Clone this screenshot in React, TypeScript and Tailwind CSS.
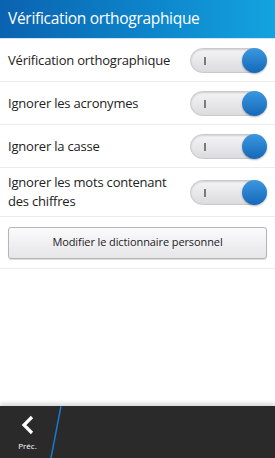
import React from "react";

const rows = [
  { label: "Vérification orthographique", h: "h-[43px]" },
  { label: "Ignorer les acronymes", h: "h-[43px]" },
  { label: "Ignorer la casse", h: "h-[43px]" },
  { label: "Ignorer les mots contenant des chiffres", h: "h-[49px]" },
];

function Toggle() {
  return (
    <div className="relative w-[77px] h-[25px] rounded-full border border-[#c9c9cc] bg-gradient-to-b from-[#f4f4f6] to-[#dcdce0] shadow-[inset_0_1px_2px_rgba(0,0,0,0.15)]">
      <div className="absolute left-[13px] top-[8px] w-[1.5px] h-[8px] bg-[#7a7a7a]" />
      <div className="absolute right-[-1px] top-[-1px] w-[25px] h-[25px] rounded-full bg-gradient-to-b from-[#3b98e0] to-[#1468b8] shadow-[0_1px_2px_rgba(0,0,0,0.3)]" />
    </div>
  );
}

export default function App() {
  return (
    <div
      className="w-[275px] h-[458px] flex flex-col bg-white overflow-hidden"
      style={{ fontFamily: "'Open Sans', 'Noto Sans', sans-serif" }}
    >
      <div className="h-[39px] shrink-0 flex items-center px-2 bg-gradient-to-r from-[#0b62b0] to-[#14a3e0] border-b border-[#cfe7f5]">
        <span className="text-white text-[15.5px] tracking-[-0.3px]">Vérification orthographique</span>
      </div>
      <div className="flex flex-col">
        {rows.map((r) => (
          <div
            key={r.label}
            className={`${r.h} flex items-center justify-between pl-2 pr-[8px] border-b border-[#ececec]`}
          >
            <span className="text-[13px] leading-[19px] text-[#222] w-[170px] tracking-[-0.2px]">{r.label}</span>
            <Toggle />
          </div>
        ))}
        <div className="h-[52px] flex items-center px-2 border-b border-[#ececec]">
          <button className="w-full h-[32px] rounded-[3px] border border-[#b5b5b8] bg-gradient-to-b from-[#fbfbfc] to-[#e6e6ea] text-[11px] text-[#222] tracking-[-0.1px] shadow-[0_1px_1px_rgba(0,0,0,0.15)]">
            Modifier le dictionnaire personnel
          </button>
        </div>
      </div>
      <div className="flex-1" />
      <div className="h-[52px] shrink-0 relative bg-[#2b2a2b] shadow-[0_-3px_4px_rgba(0,0,0,0.15)] flex">
        <div className="w-[55px] flex flex-col items-center pt-[9px]">
          <svg width="14" height="20" viewBox="0 0 14 20">
            <path d="M11 2 L3 10 L11 18" stroke="white" strokeWidth="3.2" fill="none" strokeLinejoin="miter" />
          </svg>
          <span className="text-white text-[8px] mt-[5px]">Préc.</span>
        </div>
        <svg className="absolute left-[48px] top-0" width="16" height="52" viewBox="0 0 16 52">
          <line x1="13" y1="0" x2="3" y2="52" stroke="#1a78c8" strokeWidth="1.5" />
        </svg>
      </div>
    </div>
  );
}
